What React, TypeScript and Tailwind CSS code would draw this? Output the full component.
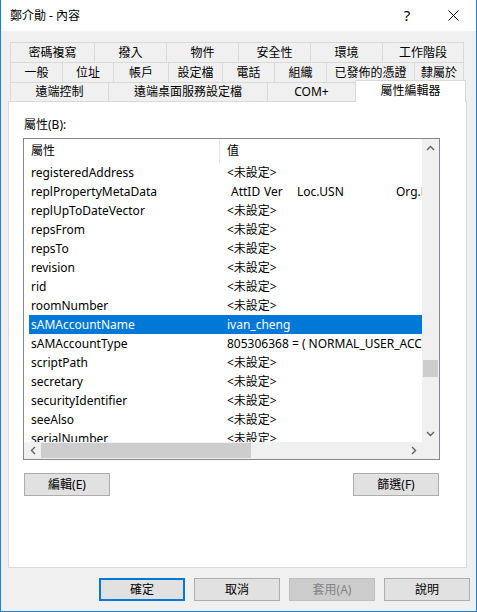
import React from "react";

const FONT = "font-['Noto_Sans','Noto_Sans_CJK_TC',sans-serif]";

function Up() {
  return (
    <svg width="9" height="6" viewBox="0 0 9 6">
      <polyline points="1,5 4.5,1.5 8,5" fill="none" stroke="#606060" strokeWidth="1.4" />
    </svg>
  );
}
function Down() {
  return (
    <svg width="9" height="6" viewBox="0 0 9 6">
      <polyline points="1,1 4.5,4.5 8,1" fill="none" stroke="#606060" strokeWidth="1.4" />
    </svg>
  );
}
function Left() {
  return (
    <svg width="6" height="9" viewBox="0 0 6 9">
      <polyline points="5,1 1.5,4.5 5,8" fill="none" stroke="#606060" strokeWidth="1.4" />
    </svg>
  );
}
function Right() {
  return (
    <svg width="6" height="9" viewBox="0 0 6 9">
      <polyline points="1,1 4.5,4.5 1,8" fill="none" stroke="#606060" strokeWidth="1.4" />
    </svg>
  );
}

const NS = "<未設定>";

type Row = { name: string; value: React.ReactNode; sel?: boolean };

const rows: Row[] = [
  { name: "registeredAddress", value: NS },
  {
    name: "replPropertyMetaData",
    value: (
      <span className="flex">
        <span className="w-[37px] shrink-0 pl-[4px]">AttID</span>
        <span className="w-[33px] shrink-0">Ver</span>
        <span className="w-[99px] shrink-0">Loc.USN</span>
        <span className="shrink-0">Org.DSA</span>
      </span>
    ),
  },
  { name: "replUpToDateVector", value: NS },
  { name: "repsFrom", value: NS },
  { name: "repsTo", value: NS },
  { name: "revision", value: NS },
  { name: "rid", value: NS },
  { name: "roomNumber", value: NS },
  { name: "sAMAccountName", value: "ivan_cheng", sel: true },
  { name: "sAMAccountType", value: "805306368 = ( NORMAL_USER_ACCOUNT )" },
  { name: "scriptPath", value: NS },
  { name: "secretary", value: NS },
  { name: "securityIdentifier", value: NS },
  { name: "seeAlso", value: NS },
  { name: "serialNumber", value: NS },
];

const tabBase =
  "flex shrink-0 items-center justify-center border-t border-l border-[#d9d9d9] bg-[#f0f0f0] leading-[16px] whitespace-nowrap";

export default function App() {
  return (
    <div
      className={`flex h-[612px] w-[477px] flex-col overflow-hidden border-x border-b border-[#1883d7] bg-[#f0f0f0] text-[12px] text-black ${FONT}`}
    >
      {/* Title bar */}
      <div className="flex h-[31px] shrink-0 items-center bg-white">
        <div className="flex-1 pl-[9px]">鄭介勛 - 內容</div>
        <div className="flex h-full w-[46px] items-center justify-center text-[15px]">?</div>
        <div className="flex h-full w-[46px] items-center justify-center">
          <svg width="11" height="11" viewBox="0 0 11 11">
            <path d="M0.5 0.5 L10.5 10.5 M10.5 0.5 L0.5 10.5" stroke="#000" strokeWidth="1" />
          </svg>
        </div>
      </div>

      {/* Tabs */}
      <div className="ml-[9px] mt-[11px] flex flex-col">
        <div className="flex h-[20px]">
          <div className={`${tabBase} w-[84px]`}>密碼複寫</div>
          <div className={`${tabBase} w-[72px]`}>撥入</div>
          <div className={`${tabBase} w-[72px]`}>物件</div>
          <div className={`${tabBase} w-[72px]`}>安全性</div>
          <div className={`${tabBase} w-[72px]`}>環境</div>
          <div className={`${tabBase} w-[82px] border-r`}>工作階段</div>
        </div>
        <div className="flex h-[20px]">
          <div className={`${tabBase} w-[52px]`}>一般</div>
          <div className={`${tabBase} w-[51px]`}>位址</div>
          <div className={`${tabBase} w-[55px]`}>帳戶</div>
          <div className={`${tabBase} w-[54px]`}>設定檔</div>
          <div className={`${tabBase} w-[52px]`}>電話</div>
          <div className={`${tabBase} w-[52px]`}>組織</div>
          <div className={`${tabBase} w-[88px]`}>已發佈的憑證</div>
          <div className={`${tabBase} w-[50px] border-r`}>隸屬於</div>
        </div>
        <div className="flex h-[19px] items-start">
          <div className={`${tabBase} h-[19px] w-[98px]`}>遠端控制</div>
          <div className={`${tabBase} h-[19px] w-[159px]`}>遠端桌面服務設定檔</div>
          <div className={`${tabBase} h-[19px] w-[88px]`}>COM+</div>
          <div className="relative z-10 mt-[-2px] flex h-[22px] w-[111px] shrink-0 justify-center border-x border-t border-[#d9d9d9] bg-white pt-[2px] leading-[16px]">
            屬性編輯器
          </div>
        </div>
      </div>

      {/* Panel */}
      <div className="ml-[7px] flex h-[467px] w-[459px] shrink-0 flex-col border border-[#d9d9d9] bg-white">
        <div className="mt-[15px] pl-[15px] leading-[16px]">屬性(B):</div>

        <div className="ml-[14px] mt-[5px] grid h-[322px] w-[417px] grid-cols-[398px_17px] grid-rows-[303px_17px] border border-[#828790]">
          {/* content */}
          <div className="overflow-hidden bg-white">
            <div className="flex h-[24px]">
              <div className="flex w-[195px] items-center pl-[7px]">屬性</div>
              <div className="h-full w-px bg-[#e5e5e5]" />
              <div className="flex items-center pl-[7px]">值</div>
            </div>
            {rows.map((r) => (
              <div
                key={r.name}
                className={`ml-[5px] flex h-[19px] w-[393px] overflow-hidden whitespace-nowrap leading-[19px] ${
                  r.sel ? "bg-[#0078d7] text-white" : ""
                }`}
              >
                <span className="w-[196px] shrink-0 pl-[2px]">{r.name}</span>
                <span className="shrink-0 pl-[2px]">{r.value}</span>
              </div>
            ))}
          </div>

          {/* vertical scrollbar */}
          <div className="flex flex-col bg-[#f0f0f0]">
            <div className="flex h-[17px] items-center justify-center">
              <Up />
            </div>
            <div className="flex-1">
              <div className="mx-px mt-[204px] h-[17px] bg-[#cdcdcd]" />
            </div>
            <div className="flex h-[17px] items-center justify-center">
              <Down />
            </div>
          </div>

          {/* horizontal scrollbar */}
          <div className="flex bg-[#f0f0f0]">
            <div className="flex w-[17px] items-center justify-center">
              <Left />
            </div>
            <div className="my-px w-[210px] bg-[#cdcdcd]" />
            <div className="flex-1" />
            <div className="flex w-[17px] items-center justify-center">
              <Right />
            </div>
          </div>

          {/* corner */}
          <div className="bg-[#f0f0f0]" />
        </div>

        <div className="ml-[15px] mt-[13px] flex w-[415px] justify-between">
          <button className="h-[23px] w-[86px] border border-[#adadad] bg-[#e1e1e1] leading-[16px]">
            編輯(E)
          </button>
          <button className="h-[23px] w-[86px] border border-[#adadad] bg-[#e1e1e1] leading-[16px]">
            篩選(F)
          </button>
        </div>
      </div>

      {/* Bottom buttons */}
      <div className="ml-[98px] mt-[10px] flex gap-[9px]">
        <button className="h-[23px] w-[86px] border-2 border-[#0078d7] bg-[#e1e1e1] leading-[16px]">
          確定
        </button>
        <button className="h-[23px] w-[86px] border border-[#adadad] bg-[#e1e1e1] leading-[16px]">
          取消
        </button>
        <button className="h-[23px] w-[86px] border border-[#bfbfbf] bg-[#cccccc] leading-[16px] text-[#838383]">
          套用(A)
        </button>
        <button className="h-[23px] w-[86px] border border-[#adadad] bg-[#e1e1e1] leading-[16px]">
          說明
        </button>
      </div>
    </div>
  );
}
